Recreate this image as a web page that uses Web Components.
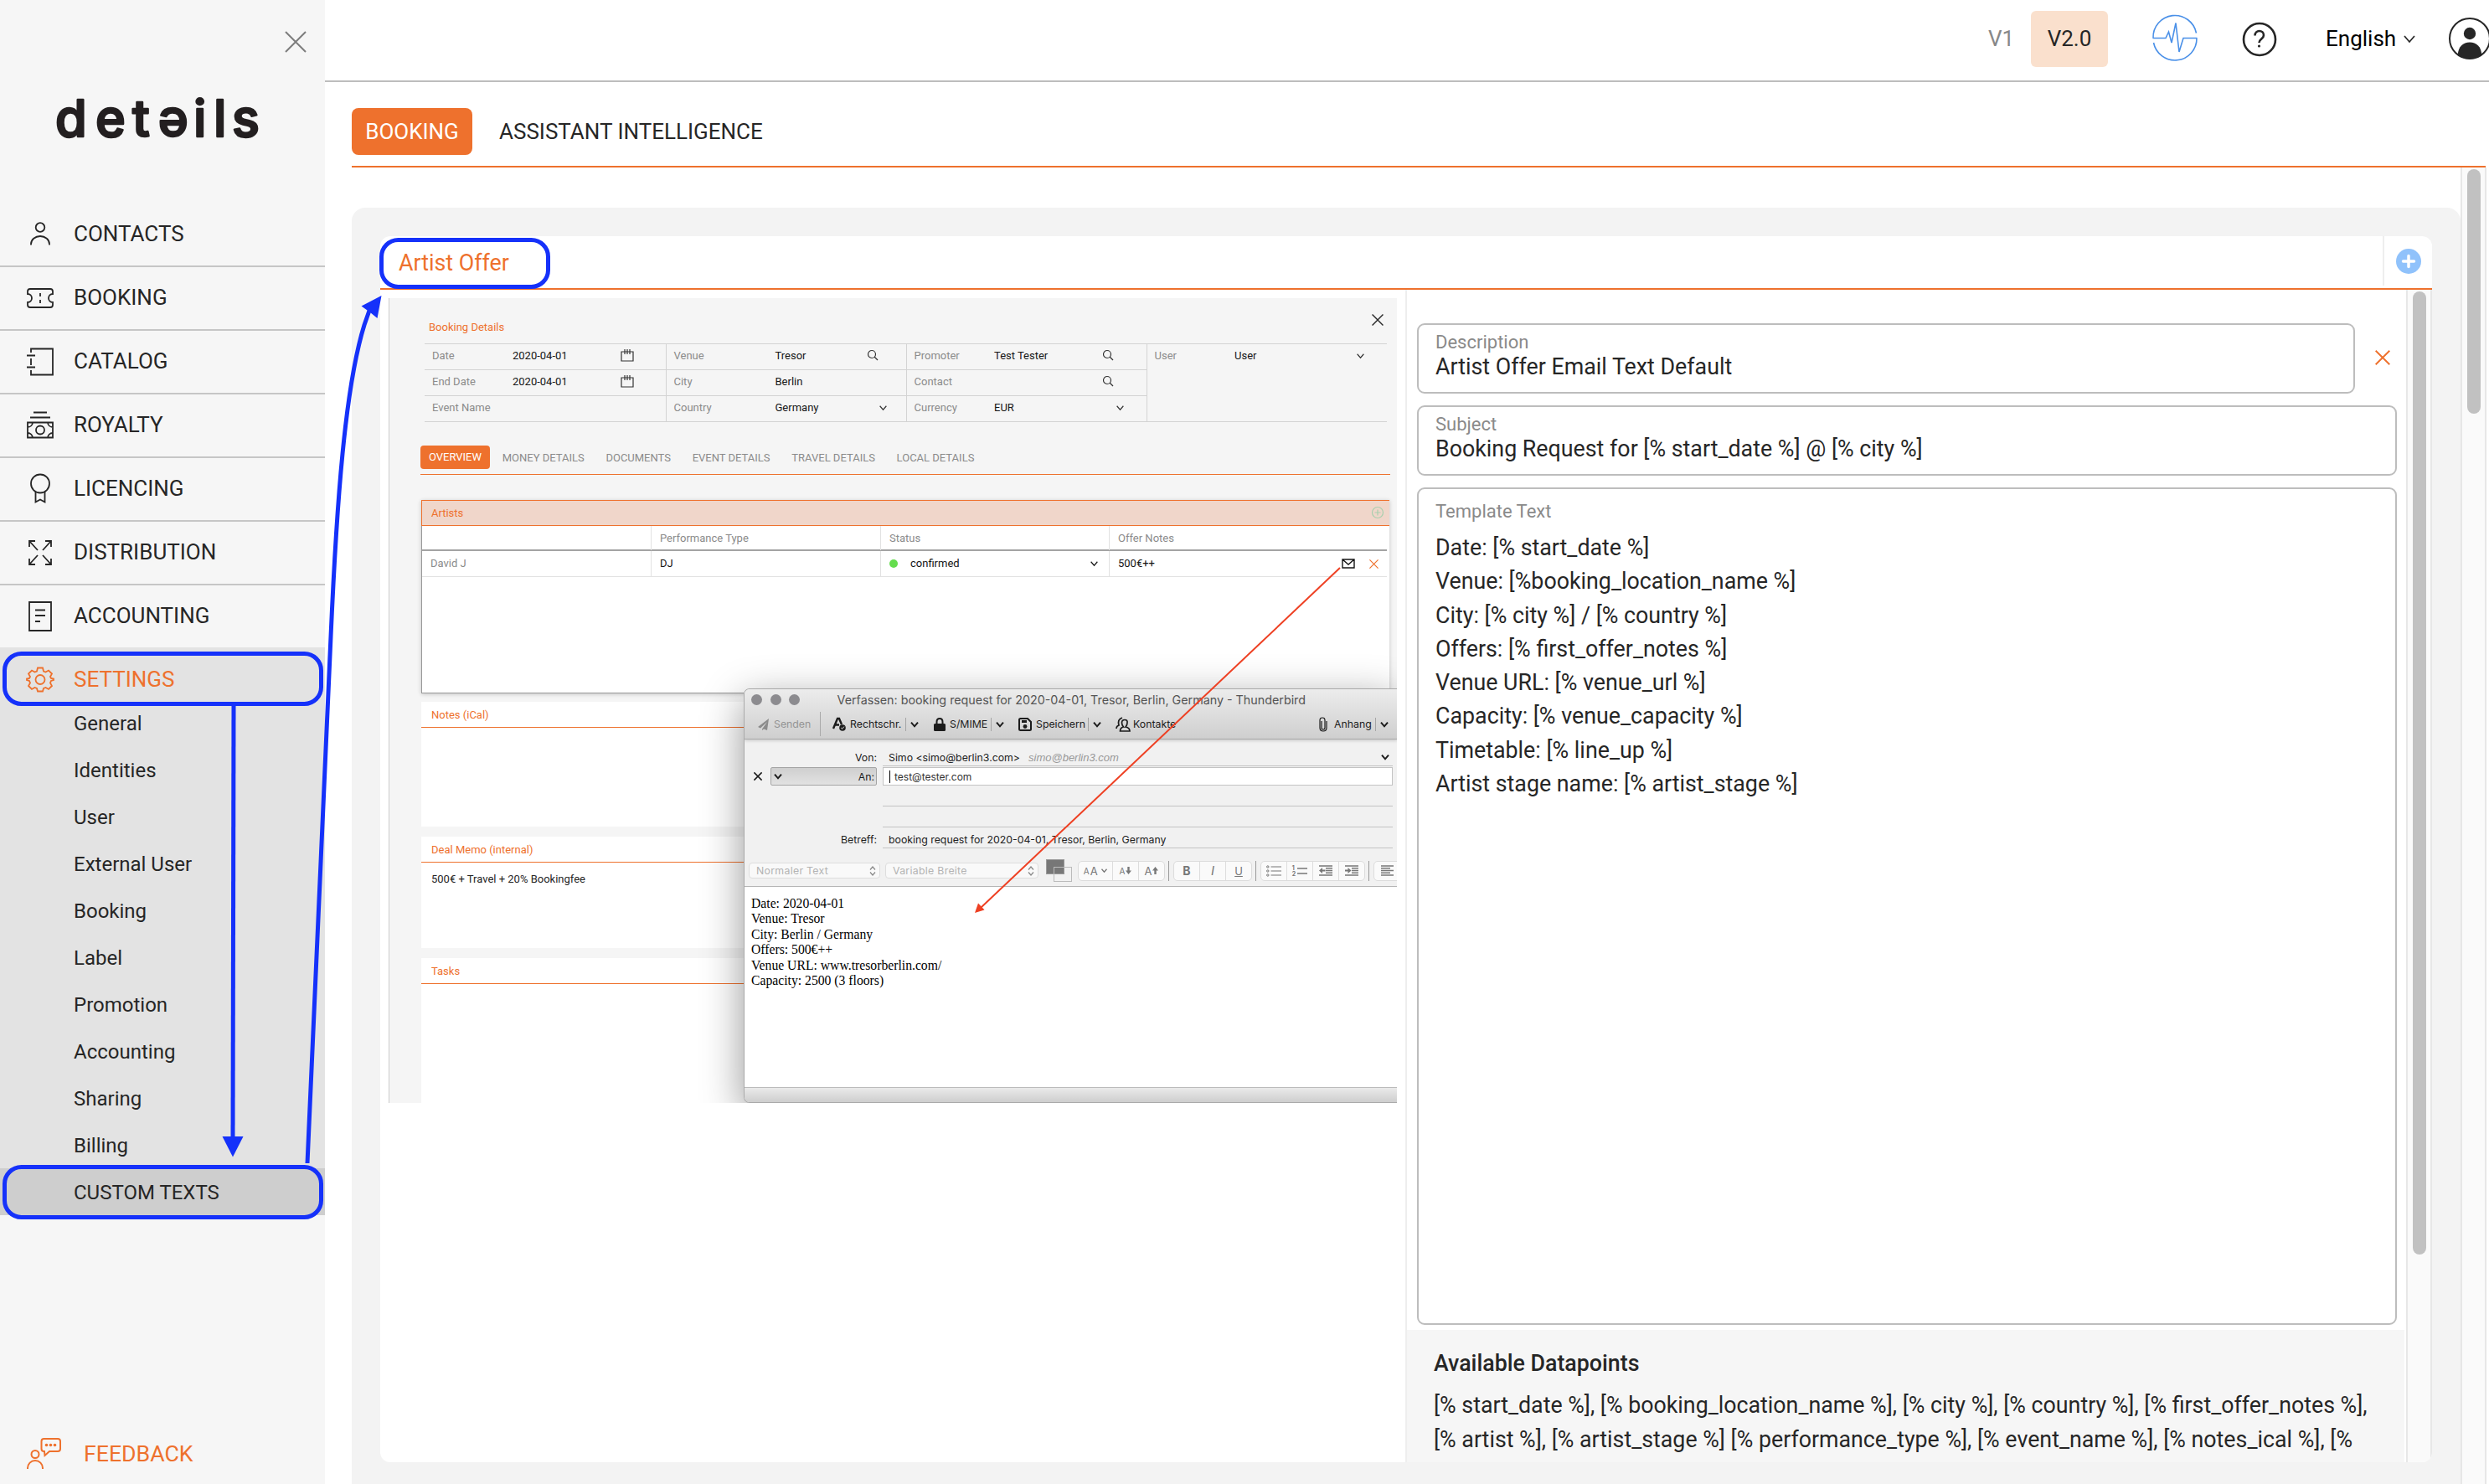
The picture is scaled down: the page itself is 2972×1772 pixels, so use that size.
<!DOCTYPE html>
<html lang="en">
<head>
<meta charset="utf-8">
<title>details - Custom Texts</title>
<style>
    html, body {
        margin: 0;
        height: 100%;
        overflow: hidden;
    }

    body {
        font-family: Roboto, "Liberation Sans", sans-serif;
        font-size: 26px;
        color: #262626;
        background: #fff;
    }
</style>
</head>
<body>
<details-app></details-app>

<script>
/**
 * Line icons, each with its own view box. They are stroked with the current
 * text colour unless the shape says otherwise.
 */
const ICONS = {
    close: ["0 0 26 26", `<path d="M1 1l24 24M25 1L1 25"/>`],
    chevron: ["0 0 14 9", `<path d="M1 1l6 7 6-7"/>`],
    contacts: ["0 0 36 36", `<circle cx="18" cy="9.5" r="5.3"/><path d="M7 30.5v-1a11 9.5 0 0 1 22 0v1"/>`],
    ticket: ["0 0 36 36", `<path d="M6 7h24q3 0 3 3v3a5 5 0 0 0 0 10v3q0 3-3 3H6q-3 0-3-3v-3a5 5 0 0 0 0-10v-3q0-3 3-3zM18 12v4M18 20v4"/>`],
    catalog: ["0 0 36 36", `<path d="M7 7V2.5h26v31H7V28M7 14v8M2 10.5h10M2 24.5h10"/>`],
    royalty: ["0 0 36 36", `<path d="M10 2.500h16M6 8.500h24M3 14.500h30v18H3zM3 20a6 6 0 0 0 6-5.500M33 20a6 6 0 0 1-6-5.500M3 27a6 6 0 0 1 6 5.500M33 27a6 6 0 0 0-6 5.500"/><circle cx="18" cy="23.500" r="5"/>`],
    licence: ["0 0 36 36", `<circle cx="18" cy="11.500" r="11"/><path d="M12.500 21v12.500l5.500-3 5.500 3V21"/>`],
    distribution: ["0 0 36 36", `<path d="M5 11V4h7M5 4l10 11M24 4h7v7M31 4L21 15M5 25v7h7M5 32l10-11M31 25v7h-7M31 32L21 21"/>`],
    accounting: ["0 0 36 36", `<path d="M5 1h26v34H5zM12 10.500h12M12 17h12M12 24h6"/>`],
    settings: ["0 0 36 36", `<path d="M15 4.500h6l1 4 2.500 1 3.500-2 4 4-2 3.500 1 2 3 .5v1.500l-3 1-1 2.500 2 3.500-4 4-3.500-2-2.500 1-1 3.500h-6l-1-3.500-2.500-1-3.500 2-4-4 2-3.500-1-2.500-3-1v-1.500l3-.5 1-2-2-3.500 4-4 3.500 2 2.500-1z"/><circle cx="18" cy="18.500" r="5.500"/>`],
    feedback: ["0 0 42 38", `<circle cx="11" cy="19.500" r="4.500"/><path d="M2 37v-1a9 9 0 0 1 18 0v1M22 16h-.5q-3 0-3-3V4q0-3 3-3H38q3 0 3 3v9q0 3-3 3H28l-5.500 5z"/><g fill="currentColor" stroke="none"><circle cx="24.500" cy="8.500" r="1.800"/><circle cx="29.500" cy="8.500" r="1.800"/><circle cx="34.500" cy="8.500" r="1.800"/></g>`],
    pulse: ["0 0 54 54", `<path d="M1 26.500a26 26 0 0 1 51.500-6M53 26.500a26 26 0 0 1-51.500 5.500M.5 26.500H16l3.500-7.500 3.500 13L28 8.500 32 43l5-16.500h16.500"/>`],
    help: ["0 0 42 42", `<circle cx="21" cy="21" r="19"/><path d="M15.500 16.500c0-7.500 10.500-7 10.500-.5 0 4.500-5.500 4.500-5.500 9"/><circle cx="20.500" cy="29" r="1.600" fill="currentColor" stroke="none"/>`],
    avatar: ["0 0 50 50", `<circle cx="25" cy="25" r="24"/><g fill="currentColor" stroke="none"><circle cx="25" cy="19" r="7.200"/><path d="M10.800 44.500C11 35 17 29.500 25 29.500S39 35 39.200 44.500Q33 49.500 25 49.500T10.800 44.500z"/></g>`],
    add: ["0 0 30 30", `<circle cx="15" cy="15" r="15" fill="#90c2fb" stroke="none"/><path d="M15 8.500v13M8.500 15h13" stroke="#fff" stroke-linecap="round"/>`],
    addSmall: ["0 0 16 16", `<circle cx="8" cy="8" r="6.500"/><path d="M8 4.500v7M4.500 8h7"/>`],
    calendar: ["0 0 16 15", `<path d="M1 3h14v11H1zM5 0v6M8 0v6M11 0v6"/>`],
    search: ["0 0 14 14", `<circle cx="6" cy="6" r="4.500"/><path d="M9 9l4 4"/>`],
    mail: ["0 0 16 12", `<path d="M1 1h14v10H1zM1 1l7 6 7-6"/>`],
    send: ["0 0 14 14", `<path d="M13 0L0 10l3 1.500L11 4 5 12.500V14l2-1.500 4 1.500z" fill="currentColor" stroke="none"/>`],
    spell: ["0 0 17 17", `<path d="M1 14L6 2h2l3 7M3.500 9.500H8" stroke-width="2.400"/><circle cx="12" cy="13" r="3.800" fill="currentColor" stroke="none"/><path d="M10.200 13l1.400 1.400 2.300-2.800" stroke="#ddd" stroke-width="1"/>`],
    lock: ["0 0 14 16", `<path d="M1.500 7h11q1.500 0 1.500 1.500v6q0 1.500-1.500 1.500h-11Q0 16 0 14.500v-6Q0 7 1.500 7z" fill="currentColor" stroke="none"/><path d="M3.500 8V5q0-4 3.500-4t3.500 4v3" stroke-width="2"/>`],
    save: ["0 0 16 16", `<path d="M2.500 1H11l4 4v8.500q0 1.500-1.500 1.500h-11Q1 15 1 13.500v-11Q1 1 2.500 1z" stroke-width="2"/><path d="M4 3h6v3H4z" fill="currentColor" stroke="none"/><circle cx="8" cy="10.500" r="2.400" fill="currentColor" stroke="none"/>`],
    people: ["0 0 18 18", `<path d="M5.500 17q0-4 4-5-2-2-2-5 0-3.500 3.500-3.500T14 7q0 3-2 5 5 1 5 5zM1 14q0-3 3-4-2-7 4-9" stroke-width="1.700"/>`],
    clip: ["0 0 10 18", `<path d="M3 5v8q0 2 2 2t2-2V4q0-3-3-3T1 4v9q0 4 4 4t4-4V5" stroke-width="1.200"/>`],
    updown: ["0 0 8 12", `<path d="M1 4.500L4 1l3 3.500M1 7.500L4 11l3-3.500"/>`],
    bullets: ["0 0 18 14", `<path d="M5.500 2H18M5.500 7H18M5.500 12H18"/><g stroke-width="1"><circle cx="1.800" cy="2" r="1.200"/><circle cx="1.800" cy="7" r="1.200"/><circle cx="1.800" cy="12" r="1.200"/></g>`],
    lines: ["0 0 12 10", `<path d="M0 2h12M0 8h12"/>`],
    outdent: ["0 0 16 13", `<path d="M0 1h16M8 3.700h8M8 6.500h8M8 9.200h8M0 12h16"/><path d="M0 6.500L4 3v2.500h3.500v2H4V10z" fill="currentColor" stroke="none"/>`],
    indent: ["0 0 16 13", `<path d="M0 1h16M8 3.700h8M8 6.500h8M8 9.200h8M0 12h16"/><path d="M7.500 6.500L3.500 3v2.500H0v2h3.500V10z" fill="currentColor" stroke="none"/>`],
    align: ["0 0 15 13", `<path d="M0 1h15M0 3.700h11M0 6.500h15M0 9.200h11M0 12h15"/>`],
    arrowDown: ["0 0 7 9", `<path d="M2.300 0h2.400v4.500H7L3.500 9 0 4.500h2.300z" fill="currentColor" stroke="none"/>`],
    arrowUp: ["0 0 7 9", `<path d="M2.300 9h2.400V4.500H7L3.500 0 0 4.500h2.300z" fill="currentColor" stroke="none"/>`]
};

/**
 * Attaches an open shadow root and fills it with the given markup.
 */
function render(element, html) {
    element.attachShadow({mode: "open"}).innerHTML = html;
}

/**
 * <ui-icon name="close" w="26" h="26" stroke="2">
 */
class UiIcon extends HTMLElement {
    connectedCallback() {
        if(this.shadowRoot) {
            return;
        }

        const icon = ICONS[this.getAttribute("name")];
        const box = icon[0].split(" ");
        const width = this.getAttribute("w") || box[2];
        const height = this.getAttribute("h") || box[3];
        const stroke = this.getAttribute("stroke") || 2;

        render(this, `
            <style>
                :host {
                    display: block;
                    flex: none;
                    width: ${width}px;
                    height: ${height}px;
                }

                svg {
                    display: block;
                    overflow: visible;
                }
            </style>
            <svg width="${width}" height="${height}" viewBox="${icon[0]}" fill="none"
                stroke="currentColor" stroke-width="${stroke}">${icon[1]}</svg>
        `);
    }
}

/**
 * One row of the main menu.
 */
class NavItem extends HTMLElement {
    connectedCallback() {
        render(this, `
            <style>
                :host {
                    box-sizing: border-box;
                    display: flex;
                    align-items: center;
                    height: 76px;
                    padding-left: 30px;
                    border-bottom: 2px solid #c6c6c6;
                    font-size: 26px;
                }

                :host([last]) {
                    height: 74px;
                    border: 0;
                }

                :host([active]) {
                    height: 62px;
                    padding-top: 14px;
                    border: 0;
                    color: #ee712d;
                }

                span {
                    margin: -2px 0 0 22px;
                }

                :host([active]) span {
                    margin-top: 0;
                }
            </style>
            <ui-icon name="${this.getAttribute("icon")}" stroke="1.800"></ui-icon>
            <span><slot></slot></span>
        `);
    }
}

class SubItem extends HTMLElement {
    connectedCallback() {
        render(this, `
            <style>
                :host {
                    box-sizing: border-box;
                    display: flex;
                    align-items: center;
                    height: 56px;
                    padding: 1px 0 0 88px;
                    font-size: 24px;
                }

                :host([active]) {
                    background: #cecece;
                }
            </style>
            <slot></slot>
        `);
    }
}

class SideBar extends HTMLElement {
    connectedCallback() {
        render(this, `
            <style>
                :host {
                    display: flex;
                    flex-direction: column;
                    width: 388px;
                    background: #f6f6f6;
                }

                .close {
                    display: flex;
                    justify-content: flex-end;
                    padding: 37px 22px 0 0;
                    color: #7d7d7d;
                }

                .logo {
                    display: block;
                    height: 180px;
                    font: 500 61px Inter, "Noto Sans", sans-serif;
                }

                .group {
                    background: #e3e3e3;
                }

                .feedback {
                    display: flex;
                    align-items: center;
                    margin-top: auto;
                    padding: 0 0 17px 31px;
                    font-size: 26.700px;
                    color: #ee712d;
                }

                .feedback span {
                    margin-left: 27px;
                }
            </style>
            <div class="close"><ui-icon name="close"></ui-icon></div>
            <svg class="logo" width="388" height="180" fill="#231f20" stroke="#231f20"
                stroke-width="2.500" stroke-linejoin="round">
                <text y="100" x="66 114 158 189 231 255 277">detəils</text>
            </svg>
            <nav>
                <nav-item icon="contacts">CONTACTS</nav-item>
                <nav-item icon="ticket">BOOKING</nav-item>
                <nav-item icon="catalog">CATALOG</nav-item>
                <nav-item icon="royalty">ROYALTY</nav-item>
                <nav-item icon="licence">LICENCING</nav-item>
                <nav-item icon="distribution">DISTRIBUTION</nav-item>
                <nav-item icon="accounting" last>ACCOUNTING</nav-item>
            </nav>
            <div class="group">
                <nav-item icon="settings" active>SETTINGS</nav-item>
                <sub-item>General</sub-item>
                <sub-item>Identities</sub-item>
                <sub-item>User</sub-item>
                <sub-item>External User</sub-item>
                <sub-item>Booking</sub-item>
                <sub-item>Label</sub-item>
                <sub-item>Promotion</sub-item>
                <sub-item>Accounting</sub-item>
                <sub-item>Sharing</sub-item>
                <sub-item>Billing</sub-item>
                <sub-item active>CUSTOM TEXTS</sub-item>
            </div>
            <div class="feedback"><ui-icon name="feedback"></ui-icon><span>FEEDBACK</span></div>
        `);
    }
}

class TopBar extends HTMLElement {
    connectedCallback() {
        render(this, `
            <style>
                :host {
                    box-sizing: border-box;
                    display: flex;
                    flex: none;
                    align-items: center;
                    height: 98px;
                    padding: 0 0 4px 1986px;
                    overflow: hidden;
                    border-bottom: 2px solid #bdbdbd;
                }

                span {
                    flex: none;
                }

                .v1 {
                    width: 51px;
                    color: #888;
                }

                .v2 {
                    width: 92px;
                    line-height: 67px;
                    border-radius: 6px;
                    text-align: center;
                    background: #fae0cd;
                }

                .pulse {
                    margin-left: 53px;
                    color: #4a90e8;
                }

                .help {
                    margin: 2px 0 0 53px;
                }

                .lang {
                    margin-left: 58px;
                    width: 93px;
                    color: #000;
                }

                .avatar {
                    margin-left: 40px;
                }
            </style>
            <span class="v1">V1</span>
            <span class="v2">V2.0</span>
            <ui-icon class="pulse" name="pulse" stroke="1.600"></ui-icon>
            <ui-icon class="help" name="help" stroke="2.600"></ui-icon>
            <span class="lang">English</span>
            <ui-icon name="chevron" stroke="1.700"></ui-icon>
            <ui-icon class="avatar" name="avatar"></ui-icon>
        `);
    }
}

class TabStrip extends HTMLElement {
    connectedCallback() {
        render(this, `
            <style>
                :host {
                    box-sizing: border-box;
                    display: flex;
                    flex: none;
                    align-items: center;
                    gap: 32px;
                    height: 102px;
                    margin: 0 4px 0 32px;
                    padding-bottom: 12px;
                    padding-top: 30px;
                    border-bottom: 2px solid #ee712d;
                    font-size: 26px;
                }

                b {
                    width: 144px;
                    line-height: 56px;
                    border-radius: 8px;
                    font-weight: 400;
                    text-align: center;
                    color: #fff;
                    background: #ee712d;
                }
            </style>
            <b>BOOKING</b>
            <span>ASSISTANT INTELLIGENCE</span>
        `);
    }
}

/**
 * Vertical scroll bar track; the thumb height comes from the "thumb" attribute.
 */
class ScrollTrack extends HTMLElement {
    connectedCallback() {
        render(this, `
            <style>
                :host {
                    box-sizing: border-box;
                    display: block;
                    flex: none;
                    width: 31px;
                    padding: 2px 0 0 6px;
                    border: solid #e7e7e7;
                    border-width: 0 2px;
                    background: #fafafa;
                }

                i {
                    display: block;
                    width: 16px;
                    height: ${this.getAttribute("thumb")}px;
                    border-radius: 8px;
                    background: #c1c1c1;
                }
            </style>
            <i></i>
        `);
    }
}

/**
 * Outlined field with a small label on top of its value.
 */
class TextField extends HTMLElement {
    connectedCallback() {
        render(this, `
            <style>
                :host {
                    box-sizing: border-box;
                    display: block;
                    flex: none;
                    height: 84px;
                    padding: 7px 20px 0;
                    border: 2px solid #bdbdbd;
                    border-radius: 9px;
                    background: #fff;
                }

                label {
                    display: block;
                    font-size: 22px;
                    line-height: 28px;
                    color: #8a8a8a;
                }

                .value {
                    font-size: 26.800px;
                    line-height: 31px;
                    white-space: pre-line;
                }

                :host([multiline]) {
                    height: 1000px;
                    padding-top: 13px;
                }

                :host([multiline]) .value {
                    margin-top: 9px;
                    line-height: 40.300px;
                }
            </style>
            <label>${this.getAttribute("label")}</label>
            <div class="value"><slot></slot></div>
        `);
    }
}

class PreviewField extends HTMLElement {
    connectedCallback() {
        const icon = this.getAttribute("icon");
        const gap = this.getAttribute("end") || 20;

        render(this, `
            <style>
                :host {
                    box-sizing: border-box;
                    display: flex;
                    align-items: center;
                    height: 31px;
                    padding: 0 ${gap}px 4px 9px;
                    border-bottom: 1px solid #d3d3d3;
                    color: #151515;
                }

                :host([plain]) {
                    border: 0;
                }

                label {
                    width: ${this.getAttribute("label-width") || 96}px;
                    color: #8b8b8b;
                }

                ui-icon {
                    margin-left: auto;
                    color: #333;
                }
            </style>
            <label>${this.getAttribute("label")}</label>
            <slot></slot>
            ${icon ? `<ui-icon name="${icon}" ${icon === "chevron" ? `w="9" h="6"` : ""} stroke="${icon === "chevron" ? 1.8 : 1.2}"></ui-icon>` : ""}
        `);
    }
}

/**
 * Titled white box in the lower half of the booking preview.
 */
class PreviewNote extends HTMLElement {
    connectedCallback() {
        render(this, `
            <style>
                :host {
                    display: block;
                    height: ${this.getAttribute("h")}px;
                    margin-bottom: 12px;
                    background: #fff;
                }

                header {
                    height: 30px;
                    padding-left: 12px;
                    border-bottom: 1px solid #ee712d;
                    line-height: 31px;
                    color: #ee712d;
                }

                div {
                    padding: 11px 12px;
                    line-height: 17px;
                }
            </style>
            <header>${this.getAttribute("label")}</header>
            <div><slot></slot></div>
        `);
    }
}

class MailWindow extends HTMLElement {
    connectedCallback() {
        const chevron = `<ui-icon name="chevron" w="10" h="6" stroke="3"></ui-icon>`;

        render(this, `
            <style>
                :host {
                    box-sizing: border-box;
                    display: flex;
                    flex-direction: column;
                    border: 1px solid #aaa;
                    border-right: 0;
                    border-radius: 7px 0 0 7px;
                    overflow: hidden;
                    font: 12.300px Inter, "Liberation Sans", sans-serif;
                    color: #1c1c1c;
                    background: #f1f1f1;
                    box-shadow: 0 14px 50px rgba(0, 0, 0, .42);
                }

                .row, .row > span, .group, .drop {
                    display: flex;
                    flex: none;
                    align-items: center;
                    white-space: nowrap;
                }

                .title {
                    height: 24px;
                    padding-left: 8px;
                    font-size: 14.300px;
                    color: #555;
                }

                .top {
                    flex: none;
                    height: 59px;
                    border-bottom: 1px solid #a9a9a9;
                    background: linear-gradient(#ececec, #cfcfcf);
                    box-shadow: 0 1px 4px rgba(0, 0, 0, .2);
                }

                .dot {
                    width: 13px;
                    height: 13px;
                    margin-right: 9.500px;
                    border-radius: 50%;
                    background: #8c8b8f;
                }

                .tools {
                    height: 35px;
                }

                .drop::before {
                    content: "";
                    width: 1px;
                    height: 16px;
                    margin-right: 5px;
                    background: #a5a5a5;
                }

                .tools span {
                    width: var(--w);
                }

                .tools > ui-icon {
                    margin-right: 5px;
                }

                .fields {
                    display: grid;
                    flex: none;
                    grid-template-columns: 158px 609px;
                    grid-template-rows: 25px 24px 24px 25px 25px;
                    column-gap: 7px;
                    margin-top: 7px;
                }

                .fields > * {
                    box-sizing: border-box;
                }

                .name {
                    line-height: 29px;
                    text-align: right;
                }

                .value {
                    display: flex;
                    align-items: center;
                    padding: 4px 0 0 7px;
                    border-bottom: 1px solid #c3c3c3;
                }

                .value ui-icon {
                    margin: 0 4px 0 auto;
                }

                em {
                    margin-left: 10px;
                    font: italic 13px "Liberation Sans", sans-serif;
                    color: #999;
                }

                .to {
                    display: flex;
                    align-items: center;
                    padding-left: 11px;
                }

                .select {
                    display: flex;
                    flex: 1;
                    align-items: center;
                    justify-content: space-between;
                    height: 20px;
                    margin-left: 10px;
                    padding: 0 2px 0 3px;
                    border: 1px solid #a4a4a4;
                    border-radius: 2px;
                    background: linear-gradient(#cfcfcf, #e2e2e2);
                }

                .fields .input {
                    height: 22px;
                    margin-top: 1px;
                    padding-top: 0;
                    border: 1px solid #c3c3c3;
                    font-size: 12px;
                    background: #fff;
                    color: #333;
                }

                .input::before {
                    content: "";
                    width: 1px;
                    height: 15px;
                    margin-right: 5px;
                    background: #000;
                }

                .format {
                    display: flex;
                    flex: none;
                    align-items: center;
                    height: 37px;
                    margin-top: 8px;
                    padding-left: 5px;
                    border-bottom: 1px solid #b5b5b5;
                    color: #777;
                }

                .pick {
                    box-sizing: border-box;
                    display: flex;
                    flex: none;
                    align-items: center;
                    justify-content: space-between;
                    height: 19px;
                    margin-right: 6px;
                    padding: 0 4px 0 8px;
                    border: 1px solid #ddd;
                    border-radius: 4px;
                    letter-spacing: .3px;
                    color: #b3b3b3;
                    background: #f9f9f9;
                }

                .pick ui-icon {
                    color: #888;
                }

                .swatch {
                    flex: none;
                    width: 20px;
                    height: 16px;
                    margin: 0 8px 10px 3px;
                    border: 1px solid #999;
                    background: #777;
                }

                .swatch::after {
                    content: "";
                    display: block;
                    width: 20px;
                    height: 16px;
                    margin: 8px 0 0 8px;
                    border: 1px solid #bbb;
                }

                .group {
                    box-sizing: border-box;
                    height: 24px;
                    border: 1px solid #dcdcdc;
                    border-radius: 5px;
                    background: #fafafa;
                }

                .group > span {
                    display: flex;
                    align-items: center;
                    justify-content: center;
                    width: 30px;
                    height: 100%;
                    font-size: 13px;
                    gap: 1px;
                }

                .group > span + span {
                    border-left: 1px solid #ddd;
                }

                hr {
                    flex: none;
                    width: 1px;
                    height: 24px;
                    margin: 0 5px;
                    border: 0;
                    background: #999;
                }

                .format hr {
                    margin: 0 5px 0 4px;
                }

                small {
                    font-size: 10px;
                }

                small.tight {
                    display: grid;
                    margin-right: 1px;
                    font-size: 7px;
                    line-height: 7px;
                }

                .body {
                    flex: 1;
                    padding: 11px 8px;
                    font: 15.700px/18.400px "Liberation Serif", serif;
                    color: #000;
                    background: #fff;
                    white-space: pre-line;
                }

                footer {
                    height: 17px;
                    border-top: 1px solid #bbb;
                    background: linear-gradient(#eaeaea, #cecece);
                }
            </style>
            <div class="top">
                <div class="row title">
                    <i class="dot"></i><i class="dot"></i><i class="dot"></i>
                    <span style="margin-left: 35px">Verfassen: booking request for 2020-04-01, Tresor, Berlin, Germany - Thunderbird</span>
                </div>
                <div class="row tools">
                    <ui-icon name="send" style="margin-left: 16px; color: #8c8c8c"></ui-icon><span style="--w: 55px; color: #949494">Senden</span>
                    <hr style="height: 29px; margin: 0 14px 0 0; background: #aaa"><ui-icon name="spell" style="margin-right: 4px"></ui-icon><span style="--w: 66px">Rechtschr.</span>
                    <div class="drop" style="margin-right: 18px">${chevron}</div><ui-icon name="lock"></ui-icon><span style="--w: 49px">S/MIME</span>
                    <div class="drop" style="margin-right: 17px">${chevron}</div><ui-icon name="save"></ui-icon><span style="--w: 62px">Speichern</span>
                    <div class="drop" style="margin-right: 17px">${chevron}</div><ui-icon name="people" style="margin-right: 3px"></ui-icon><span style="--w: 222px">Kontakte</span>
                    <ui-icon name="clip" style="margin-right: 8px"></ui-icon><span style="--w: 49px">Anhang</span>
                    <div class="drop">${chevron}</div>
                </div>
            </div>
            <div class="fields">
                <div class="name">Von:</div>
                <div class="value"><span>Simo &lt;simo@berlin3.com&gt;</span><em>simo@berlin3.com</em>${chevron}</div>
                <div class="to">
                    <ui-icon name="close" w="10" h="10" stroke="4"></ui-icon>
                    <div class="select">${chevron}<span>An:</span></div>
                </div>
                <div class="value input">test@tester.com</div>
                <div></div><div class="value"></div>
                <div></div><div class="value"></div>
                <div class="name">Betreff:</div>
                <div class="value">booking request for 2020-04-01, Tresor, Berlin, Germany</div>
            </div>
            <div class="format">
                <div class="pick" style="width: 157px">Normaler Text<ui-icon name="updown" stroke="1.200"></ui-icon></div>
                <div class="pick" style="width: 183px">Variable Breite<ui-icon name="updown" stroke="1.200"></ui-icon></div>
                <div class="swatch"></div>
                <div class="group" style="margin-left: 8px">
                    <span style="width: 40px"><small>A</small>A&nbsp;<ui-icon name="chevron" w="7" h="5" stroke="2.600"></ui-icon></span>
                    <span><small>A</small><ui-icon name="arrowDown"></ui-icon></span>
                    <span>A<ui-icon name="arrowUp"></ui-icon></span>
                </div>
                <hr>
                <div class="group"><span><b style="font-size: 14px">B</b></span><span><i style="font-size: 15px">I</i></span><span><u>U</u></span></div>
                <hr>
                <div class="group">
                    <span><ui-icon name="bullets" stroke="1.200"></ui-icon></span>
                    <span><small class="tight"><b>1</b><b>2</b></small><ui-icon name="lines" stroke="1.300"></ui-icon></span>
                    <span><ui-icon name="outdent" stroke="1.400"></ui-icon></span>
                    <span><ui-icon name="indent" stroke="1.400"></ui-icon></span>
                </div>
                <hr>
                <div class="group" style="border-radius: 5px 0 0 5px"><span><ui-icon name="align" stroke="1.400"></ui-icon></span></div>
            </div>
            <div class="body">Date: 2020-04-01
                Venue: Tresor
                City: Berlin / Germany
                Offers: 500€++
                Venue URL: www.tresorberlin.com/
                Capacity: 2500 (3 floors)</div>
            <footer></footer>
        `);
    }
}

/**
 * Booking screen with the mail compose window lying over it.
 */
class BookingPreview extends HTMLElement {
    connectedCallback() {
        render(this, `
            <style>
                :host {
                    box-sizing: border-box;
                    position: relative;
                    display: block;
                    width: 1204px;
                    height: 961px;
                    padding-left: 37px;
                    border-left: 1px solid #ccc;
                    overflow: hidden;
                    font-size: 13px;
                    background: #f5f5f5;
                }

                .head {
                    display: flex;
                    justify-content: space-between;
                    height: 54px;
                    padding: 0 16px 0 10px;
                }

                h2 {
                    margin: 27px 0 0;
                    font-size: 13px;
                    font-weight: 400;
                    line-height: 16px;
                    color: #ee712d;
                }

                .head ui-icon {
                    margin-top: 19px;
                }

                .details {
                    display: grid;
                    grid-template-columns: 287.500px 287px 287px 287.500px;
                    width: 1149px;
                    height: 92px;
                    margin-left: 5px;
                    border: solid #d3d3d3;
                    border-width: 1px 0;
                }

                .details > div + div {
                    border-left: 1px solid #d3d3d3;
                }

                .details > div > :last-child {
                    border: 0;
                }

                .tabs {
                    display: flex;
                    align-items: center;
                    gap: 25.700px;
                    width: 1158px;
                    height: 34px;
                    margin-top: 27px;
                    padding-bottom: 1px;
                    border-bottom: 1px solid #ee712d;
                    color: #8b8b8b;
                }

                .tabs b {
                    width: 83px;
                    margin: 0 -11px 4px 0;
                    line-height: 28px;
                    border-radius: 4px;
                    font-weight: 400;
                    text-align: center;
                    color: #fff;
                    background: #ee712d;
                }

                .tabs span {
                    margin-bottom: 4px;
                }

                .artists {
                    box-sizing: border-box;
                    width: 1156px;
                    height: 231px;
                    margin: 30px 0 10px 1px;
                    border: 1px solid #999;
                    border-right: 0;
                    border-top: 0;
                    background: #fff;
                    box-shadow: 0 1px 5px rgba(0, 0, 0, .2);
                }

                .bar {
                    display: flex;
                    align-items: center;
                    justify-content: space-between;
                    height: 29px;
                    margin-left: -1px;
                    padding: 0 6px 0 11px;
                    border: 1px solid #ee712d;
                    border-right: 0;
                    color: #ee712d;
                    background: #f0d6ca;
                }

                .bar ui-icon {
                    margin-top: -2px;
                    color: #a9cfae;
                }

                .row {
                    display: grid;
                    grid-template-columns: 273px 274px 273px 329px;
                    width: 1152px;
                    height: 28px;
                    border-bottom: 2px solid #a3a3a3;
                    line-height: 29px;
                    color: #8b8b8b;
                }

                .row > span {
                    display: flex;
                    align-items: center;
                    padding-left: 10px;
                }

                .row > span + span {
                    border-left: 1px solid #e2e2e2;
                }

                .data {
                    height: 30px;
                    border-bottom: 1px solid #e2e2e2;
                    line-height: 30px;
                }

                .data > span + span {
                    color: #151515;
                }

                .state {
                    width: 10px;
                    height: 10px;
                    margin-right: 15px;
                    border-radius: 50%;
                    background: #65dd4e;
                }

                .notes {
                    width: 1156px;
                    margin-left: 1px;
                }

                mail-window {
                    position: absolute;
                    left: 423px;
                    top: 466px;
                    width: 781px;
                    height: 495px;
                }

                .pointer {
                    position: absolute;
                    left: 0;
                    top: 0;
                }
            </style>
            <div class="head"><h2>Booking Details</h2><ui-icon name="close" w="14" h="14" stroke="2.600"></ui-icon></div>
            <div class="details">
                <div>
                    <preview-field label="Date" icon="calendar" end="38">2020-04-01</preview-field>
                    <preview-field label="End Date" icon="calendar" end="38">2020-04-01</preview-field>
                    <preview-field label="Event Name"></preview-field>
                </div>
                <div>
                    <preview-field label="Venue" label-width="121" icon="search" end="33">Tresor</preview-field>
                    <preview-field label="City" label-width="121">Berlin</preview-field>
                    <preview-field label="Country" label-width="121" icon="chevron" end="23">Germany</preview-field>
                </div>
                <div>
                    <preview-field label="Promoter" label-width="95.500" icon="search" end="39">Test Tester</preview-field>
                    <preview-field label="Contact" label-width="95.500" icon="search" end="39"></preview-field>
                    <preview-field label="Currency" label-width="95.500" icon="chevron" end="27">EUR</preview-field>
                </div>
                <div>
                    <preview-field label="User" label-width="95.500" icon="chevron" end="27" plain>User</preview-field>
                </div>
            </div>
            <div class="tabs">
                <b>OVERVIEW</b>
                <span>MONEY DETAILS</span>
                <span>DOCUMENTS</span>
                <span>EVENT DETAILS</span>
                <span>TRAVEL DETAILS</span>
                <span>LOCAL DETAILS</span>
            </div>
            <div class="artists">
                <div class="bar">Artists<ui-icon name="addSmall" stroke="1.200"></ui-icon></div>
                <div class="row"><span></span><span>Performance Type</span><span>Status</span><span>Offer Notes</span></div>
                <div class="row data">
                    <span>David J</span>
                    <span>DJ</span>
                    <span><i class="state"></i>confirmed<ui-icon name="chevron" w="9" h="6" stroke="1.800" style="margin: 0 13px 0 auto"></ui-icon></span>
                    <span>500€++<ui-icon name="mail" stroke="1.400" style="margin: 0 17px 0 auto"></ui-icon><ui-icon name="close" w="11" h="11" stroke="2.800" style="color: #ee712d; margin-right: 7px"></ui-icon></span>
                </div>
            </div>
            <div class="notes">
                <preview-note label="Notes (iCal)" h="149"></preview-note>
                <preview-note label="Deal Memo (internal)" h="133">500€ + Travel + 20% Bookingfee</preview-note>
                <preview-note label="Tasks" h="180"></preview-note>
            </div>
            <mail-window></mail-window>
            <svg class="pointer" width="1204" height="961">
                <path d="M1135 322L706 728" stroke="#ee4023" stroke-width="2"/>
                <path d="M699 734l4-11.500 7.500 8z" fill="#ee4023"/>
            </svg>
        `);
    }
}

class OfferPanel extends HTMLElement {
    connectedCallback() {
        render(this, `
            <style>
                :host {
                    display: flex;
                    flex-direction: column;
                    width: 2450px;
                    height: 1464px;
                    border-radius: 12px;
                    overflow: hidden;
                    background: #fff;
                }

                header {
                    display: flex;
                    flex: none;
                    height: 62px;
                    border-bottom: 2px solid #ee712d;
                    font-size: 26.800px;
                    line-height: 64px;
                    color: #ee712d;
                }

                header span {
                    flex: 1;
                    padding-left: 22px;
                }

                header div {
                    height: 59px;
                    padding: 0 13px 0 14px;
                    border-left: 2px solid #eee;
                }

                header ui-icon {
                    margin-top: 15px;
                }

                main {
                    display: flex;
                    flex: 1;
                    min-height: 0;
                }

                .left {
                    width: 1214px;
                    padding: 10px 0 0 10px;
                    border-right: 2px solid #eee;
                    box-sizing: content-box;
                }

                .form {
                    display: flex;
                    flex: 1;
                    flex-direction: column;
                    gap: 14px;
                    min-width: 0;
                    padding-top: 40px;
                    overflow: hidden;
                }

                text-field {
                    margin: 0 11px 0 12px;
                }

                .line {
                    display: flex;
                    align-items: center;
                    color: #ee712d;
                }

                .line text-field {
                    flex: 1;
                    margin-right: 24px;
                    color: #262626;
                }

                .line ui-icon {
                    margin: -2px 19px 0 0;
                }

                .points {
                    flex: 1;
                    margin: -8px 2px 0 0;
                    padding: 20px 0 0 32px;
                    background: #f6f6f6;
                    font-size: 26.780px;
                    line-height: 41px;
                    white-space: nowrap;
                }

                h3 {
                    margin: 0 0 9px;
                    font-size: 26.780px;
                    font-weight: 500;
                }

                p {
                    margin: 0;
                    height: 100px;
                }
            </style>
            <header><span>Artist Offer</span><div><ui-icon name="add" stroke="3.500"></ui-icon></div></header>
            <main>
                <div class="left"><booking-preview></booking-preview></div>
                <div class="form">
                    <div class="line">
                        <text-field label="Description">Artist Offer Email Text Default</text-field>
                        <ui-icon name="close" w="18" h="18" stroke="2.800"></ui-icon>
                    </div>
                    <text-field label="Subject">Booking Request for [% start_date %] @ [% city %]</text-field>
                    <text-field label="Template Text" multiline>Date: [% start_date %]
                        Venue: [%booking_location_name %]
                        City: [% city %] / [% country %]
                        Offers: [% first_offer_notes %]
                        Venue URL: [% venue_url %]
                        Capacity: [% venue_capacity %]
                        Timetable: [% line_up %]
                        Artist stage name: [% artist_stage %]</text-field>
                    <div class="points">
                        <h3>Available Datapoints</h3>
                        <p>[% start_date %], [% booking_location_name %], [% city %], [% country %], [% first_offer_notes %],<br>[% artist %], [% artist_stage %] [% performance_type %], [% event_name %], [% notes_ical %], [%</p>
                    </div>
                </div>
                <scroll-track thumb="1150"></scroll-track>
            </main>
        `);
    }
}

/**
 * Blue walkthrough marks drawn over the whole page.
 */
class GuideMarks extends HTMLElement {
    connectedCallback() {
        render(this, `
            <style>
                :host {
                    position: absolute;
                    left: 0;
                    top: 0;
                    pointer-events: none;
                }

                svg {
                    display: block;
                }
            </style>
            <svg width="2972" height="1772" fill="none" stroke="#1531fa" stroke-width="5">
                <rect x="5.500" y="780.500" width="378" height="60" rx="20"/>
                <rect x="5.500" y="1393.500" width="378" height="60" rx="20"/>
                <rect x="455.500" y="286.500" width="199" height="56" rx="20"/>
                <path d="M279 843L278 1360"/>
                <path d="M367 1389L395 760C402 600 412 462 435 388L442 368"/>
                <g fill="#1531fa" stroke="none">
                    <path d="M265.500 1357h25L278 1381.500z"/>
                    <path d="M455.500 353L431.500 365.500l10.500 7.500 8.500 7z"/>
                </g>
            </svg>
        `);
    }
}

class DetailsApp extends HTMLElement {
    connectedCallback() {
        render(this, `
            <style>
                :host {
                    position: relative;
                    display: flex;
                    width: 2972px;
                    height: 1772px;
                    overflow: hidden;
                }

                side-bar {
                    flex: none;
                }

                .page {
                    display: flex;
                    flex: 1;
                    flex-direction: column;
                    min-width: 0;
                }

                .scroll {
                    display: flex;
                    flex: 1;
                    min-height: 0;
                    margin: 0 3px 0 32px;
                }

                .content {
                    flex: 1;
                    padding-top: 48px;
                }

                .panel {
                    height: 100%;
                    padding: 34px 0 0 34px;
                    border-radius: 16px;
                    background: #f3f3f3;
                }
            </style>
            <side-bar></side-bar>
            <div class="page">
                <top-bar></top-bar>
                <tab-strip></tab-strip>
                <div class="scroll">
                    <div class="content"><div class="panel"><offer-panel></offer-panel></div></div>
                    <scroll-track thumb="292"></scroll-track>
                </div>
            </div>
            <guide-marks></guide-marks>
        `);
    }
}

customElements.define("ui-icon", UiIcon);
customElements.define("nav-item", NavItem);
customElements.define("sub-item", SubItem);
customElements.define("side-bar", SideBar);
customElements.define("top-bar", TopBar);
customElements.define("tab-strip", TabStrip);
customElements.define("scroll-track", ScrollTrack);
customElements.define("text-field", TextField);
customElements.define("preview-field", PreviewField);
customElements.define("preview-note", PreviewNote);
customElements.define("mail-window", MailWindow);
customElements.define("booking-preview", BookingPreview);
customElements.define("offer-panel", OfferPanel);
customElements.define("guide-marks", GuideMarks);
customElements.define("details-app", DetailsApp);
</script>
</body>
</html>
